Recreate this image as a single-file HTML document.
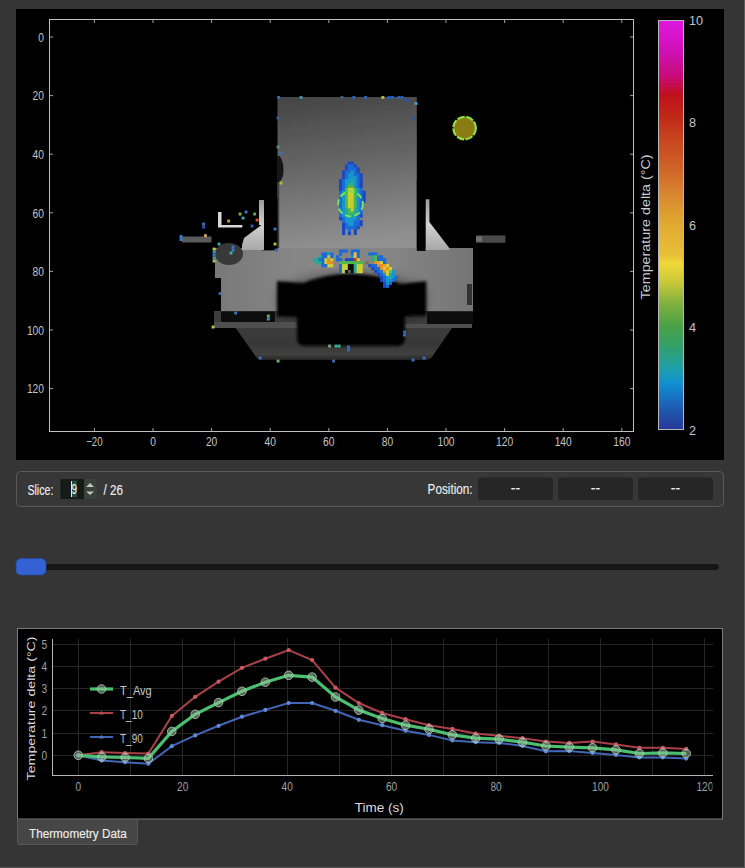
<!DOCTYPE html>
<html><head><meta charset="utf-8">
<style>
html,body{margin:0;padding:0;}
body{width:745px;height:868px;background:#353535;position:relative;overflow:hidden;font-family:"Liberation Sans",sans-serif;}
svg{position:absolute;left:0;top:0;}
.tk{font-family:"Liberation Sans",sans-serif;font-size:12.5px;fill:#a0a0a0;}
.lbl{font-family:"Liberation Sans",sans-serif;font-size:13px;fill:#dcdcdc;}
.leg{font-family:"Liberation Sans",sans-serif;font-size:12px;fill:#c4c4c4;}
.itk{font-family:"Liberation Sans",sans-serif;font-size:12.6px;fill:#c4c4c4;}
.clbl{font-family:"Liberation Sans",sans-serif;font-size:12px;fill:#cccccc;}
.ui{font-family:"Liberation Sans",sans-serif;font-size:14px;fill:#ececec;stroke:#ececec;stroke-width:0.15px;}
</style></head>
<body>
<svg width="745" height="868" viewBox="0 0 745 868">
<rect x="744" y="0" width="1" height="868" fill="#5c5c5c"/>
<rect x="0" y="867" width="745" height="1" fill="#555"/>
<rect x="16" y="9" width="708" height="451" fill="#000"/>
<defs>
<linearGradient id="ph" x1="0" y1="0" x2="0.12" y2="1">
<stop offset="0" stop-color="#444444"/><stop offset="0.5" stop-color="#686868"/><stop offset="1" stop-color="#909090"/>
</linearGradient>
<linearGradient id="bd" x1="0" y1="0" x2="1" y2="0">
<stop offset="0" stop-color="#787878"/><stop offset="0.3" stop-color="#868686"/><stop offset="0.7" stop-color="#848484"/><stop offset="1" stop-color="#747474"/>
</linearGradient>
<linearGradient id="tr" x1="0" y1="0" x2="0" y2="1">
<stop offset="0" stop-color="#3e3e3e"/><stop offset="0.7" stop-color="#383838"/><stop offset="0.88" stop-color="#404040"/><stop offset="1" stop-color="#262626"/>
</linearGradient>
<linearGradient id="wl" x1="0" y1="0" x2="0" y2="1">
<stop offset="0" stop-color="#9a9a9a"/><stop offset="0.5" stop-color="#d0d0d0"/><stop offset="1" stop-color="#a8a8a8"/>
</linearGradient>
<filter id="bl" x="-20%" y="-20%" width="140%" height="140%"><feGaussianBlur stdDeviation="7"/></filter>
<filter id="b2" x="-30%" y="-30%" width="160%" height="160%"><feGaussianBlur stdDeviation="2.5"/></filter>
<filter id="b3" x="-10%" y="-10%" width="120%" height="120%"><feGaussianBlur stdDeviation="1.6"/></filter>
<filter id="b1" x="-5%" y="-5%" width="110%" height="110%"><feGaussianBlur stdDeviation="0.7"/></filter>
</defs>
<g filter="url(#b1)">
<rect x="277.5" y="97" width="139.3" height="154" fill="url(#ph)"/>
<path d="M277 156H279.5Q283.5 161 283.5 170Q283.5 178 279.5 182H277Z" fill="#141414"/><rect x="277.2" y="182" width="2" height="68" fill="#3a3a3a"/>
<path d="M215 248H473V311.5H221V278H215Z" fill="url(#bd)"/>
<rect x="467" y="284" width="5" height="21" fill="#303030"/>
<path d="M214 311H473V324L452 328L434 354Q431 360 426 360H262Q257 360 254 354L235.7 328L214 324Z" fill="url(#tr)"/>
<rect x="221" y="311.5" width="54" height="10.5" fill="#0a0a0a"/>
<rect x="427" y="311.5" width="46" height="12.5" fill="#0a0a0a"/>
<rect x="214" y="322" width="83" height="6" fill="#505050"/>
<rect x="405" y="324" width="67" height="4" fill="#505050"/>
<path d="M282 290Q352 262 422 290V314H282Z" fill="#000" fill-opacity="0.6" filter="url(#bl)"/>
<path d="M277 281L303 283Q352 264 401 284L426.3 281V316H405V338Q405 346 397 346H305Q297 346 297 338V316.4H277Z" fill="#060606" filter="url(#b3)"/>
<ellipse cx="229" cy="254" rx="14" ry="11" fill="#383838"/>
<rect x="262" y="198" width="15.5" height="52.4" fill="#000"/>
<path d="M259 200H264V250H242V245L244 238L261.5 225H259Z" fill="url(#wl)"/>
<rect x="416.8" y="180" width="8.9" height="70.9" fill="#000"/>
<path d="M425.7 199.2H429.4V222L449.3 248V250H425.7Z" fill="url(#wl)"/>
<path d="M218 212H221.5V225H242.3V227.6H218Z" fill="#d8d8d8"/>
<rect x="182" y="236.5" width="29.5" height="6" fill="#5a5a5a"/>
<rect x="476" y="235.4" width="29.4" height="7.4" fill="#4a4a4a"/>
<rect x="476" y="236.5" width="6" height="5" fill="#707070"/>
</g>
<g filter="url(#b1)">
<rect x="277.2" y="96.0" width="2.9" height="2.9" fill="#2a68c8"/>
<rect x="299.6" y="96.0" width="2.9" height="2.9" fill="#4a90b0"/>
<rect x="340.6" y="96.0" width="2.9" height="2.9" fill="#3a5aa0"/>
<rect x="352.4" y="96.0" width="2.9" height="2.9" fill="#2a60c0"/>
<rect x="364.2" y="96.0" width="2.9" height="2.9" fill="#2a60c8"/>
<rect x="381.4" y="96.0" width="2.9" height="2.9" fill="#a8c040"/>
<rect x="387.6" y="96.0" width="2.9" height="2.9" fill="#1a60d0"/>
<rect x="390.9" y="96.0" width="2.9" height="2.9" fill="#1a60d0"/>
<rect x="397.4" y="96.0" width="2.9" height="2.9" fill="#2060c8"/>
<rect x="400.6" y="96.0" width="2.9" height="2.9" fill="#2060c8"/>
<rect x="406.1" y="99.0" width="2.9" height="2.9" fill="#2a50b0"/>
<rect x="414.6" y="102.0" width="2.9" height="2.9" fill="#40a0c8"/>
<rect x="412.4" y="116.5" width="2.9" height="2.9" fill="#3050a8"/>
<rect x="276.6" y="116.5" width="2.9" height="2.9" fill="#3a5aa8"/>
<rect x="276.6" y="145.6" width="2.9" height="2.9" fill="#40a060"/>
<rect x="279.6" y="151.6" width="2.9" height="2.9" fill="#3a70b0"/>
<rect x="279.6" y="181.6" width="2.9" height="2.9" fill="#b0b840"/>
<rect x="273.6" y="227.6" width="2.9" height="2.9" fill="#3a78b8"/>
<rect x="273.6" y="242.6" width="2.9" height="2.9" fill="#b8c040"/>
<rect x="274.6" y="248.6" width="2.9" height="2.9" fill="#3a68b8"/>
<rect x="227.2" y="219.6" width="2.9" height="2.9" fill="#c89a50"/><rect x="244.6" y="210.6" width="2.9" height="2.9" fill="#3a78c8"/><rect x="238.6" y="212.6" width="2.9" height="2.9" fill="#80b040"/><rect x="241.6" y="216.6" width="2.9" height="2.9" fill="#40a8b0"/><rect x="253.2" y="212.6" width="2.9" height="2.9" fill="#50b050"/><rect x="255.6" y="218.6" width="2.9" height="2.9" fill="#d05030"/><rect x="250.6" y="224.6" width="2.9" height="2.9" fill="#2a60c0"/><rect x="202.1" y="222.6" width="2.9" height="2.9" fill="#3a70c0"/><rect x="202.1" y="225.6" width="2.9" height="2.9" fill="#2a58b0"/><rect x="179.6" y="235.1" width="2.9" height="2.9" fill="#3a80d0"/><rect x="179.6" y="238.1" width="2.9" height="2.9" fill="#3a80d0"/><rect x="204.0" y="234.2" width="2.9" height="2.9" fill="#d0a060"/><rect x="217.6" y="242.6" width="2.9" height="2.9" fill="#40a0b0"/><rect x="212.6" y="247.6" width="2.9" height="2.9" fill="#c8c040"/><rect x="212.6" y="250.6" width="2.9" height="2.9" fill="#3a90c8"/><rect x="212.6" y="253.6" width="2.9" height="2.9" fill="#2a80c0"/><rect x="212.6" y="256.6" width="2.9" height="2.9" fill="#40a0a0"/><rect x="212.6" y="259.6" width="2.9" height="2.9" fill="#a8c060"/><rect x="231.6" y="245.6" width="2.9" height="2.9" fill="#3a70c0"/><rect x="231.6" y="248.6" width="2.9" height="2.9" fill="#3a78c8"/><rect x="229.6" y="251.6" width="2.9" height="2.9" fill="#40b0a0"/><rect x="218.6" y="292.1" width="2.9" height="2.9" fill="#3a68b0"/><rect x="234.2" y="311.6" width="2.9" height="2.9" fill="#3a70c0"/><rect x="211.6" y="325.6" width="2.9" height="2.9" fill="#c8c050"/><rect x="266.9" y="314.6" width="2.9" height="2.9" fill="#60b060"/><rect x="266.9" y="317.6" width="2.9" height="2.9" fill="#3a90c0"/>
<rect x="328.1" y="344.6" width="2.9" height="2.9" fill="#8a9a80"/><rect x="334.6" y="344.6" width="2.9" height="2.9" fill="#40b090"/><rect x="337.6" y="344.6" width="2.9" height="2.9" fill="#40b090"/><rect x="347.1" y="345.6" width="2.9" height="2.9" fill="#3a68c0"/><rect x="347.1" y="348.6" width="2.9" height="2.9" fill="#3a68c0"/><rect x="258.6" y="356.6" width="2.9" height="2.9" fill="#3a70c0"/><rect x="276.6" y="359.6" width="2.9" height="2.9" fill="#70b070"/><rect x="332.1" y="359.6" width="2.9" height="2.9" fill="#3a68b0"/><rect x="411.6" y="358.6" width="2.9" height="2.9" fill="#3a70c0"/><rect x="422.6" y="356.6" width="2.9" height="2.9" fill="#3a70c0"/><rect x="403.1" y="330.6" width="2.9" height="2.9" fill="#3a68c8"/><rect x="403.1" y="333.6" width="2.9" height="2.9" fill="#3a68c8"/>
<rect x="347.85" y="161.53" width="6.11" height="3.25" fill="#1a48c0"/>
<rect x="344.92" y="164.46" width="3.18" height="3.25" fill="#1a48c0"/>
<rect x="347.85" y="164.46" width="6.11" height="3.25" fill="#1a6ad8"/>
<rect x="353.71" y="164.46" width="3.18" height="3.25" fill="#1a48c0"/>
<rect x="344.92" y="167.39" width="3.18" height="3.25" fill="#1a48c0"/>
<rect x="347.85" y="167.39" width="9.04" height="3.25" fill="#1a6ad8"/>
<rect x="356.63" y="167.39" width="3.18" height="3.25" fill="#1a48c0"/>
<rect x="341.99" y="170.31" width="3.18" height="3.25" fill="#1a48c0"/>
<rect x="344.92" y="170.31" width="6.11" height="3.25" fill="#1a6ad8"/>
<rect x="350.77" y="170.31" width="3.18" height="3.25" fill="#1496d0"/>
<rect x="353.71" y="170.31" width="3.18" height="3.25" fill="#1a6ad8"/>
<rect x="356.63" y="170.31" width="3.18" height="3.25" fill="#1a48c0"/>
<rect x="341.99" y="173.25" width="3.18" height="3.25" fill="#1a48c0"/>
<rect x="344.92" y="173.25" width="3.18" height="3.25" fill="#1a6ad8"/>
<rect x="347.85" y="173.25" width="6.11" height="3.25" fill="#1496d0"/>
<rect x="353.71" y="173.25" width="6.11" height="3.25" fill="#1a6ad8"/>
<rect x="359.56" y="173.25" width="3.18" height="3.25" fill="#1a48c0"/>
<rect x="341.99" y="176.18" width="3.18" height="3.25" fill="#1a48c0"/>
<rect x="344.92" y="176.18" width="3.18" height="3.25" fill="#1a6ad8"/>
<rect x="347.85" y="176.18" width="9.04" height="3.25" fill="#1496d0"/>
<rect x="356.63" y="176.18" width="3.18" height="3.25" fill="#1a6ad8"/>
<rect x="359.56" y="176.18" width="3.18" height="3.25" fill="#1a48c0"/>
<rect x="339.06" y="179.11" width="3.18" height="3.25" fill="#1a48c0"/>
<rect x="341.99" y="179.11" width="3.18" height="3.25" fill="#1a6ad8"/>
<rect x="344.92" y="179.11" width="6.11" height="3.25" fill="#1496d0"/>
<rect x="350.77" y="179.11" width="3.18" height="3.25" fill="#22aa96"/>
<rect x="353.71" y="179.11" width="3.18" height="3.25" fill="#1496d0"/>
<rect x="356.63" y="179.11" width="3.18" height="3.25" fill="#1a6ad8"/>
<rect x="359.56" y="179.11" width="3.18" height="3.25" fill="#1a48c0"/>
<rect x="339.06" y="182.03" width="3.18" height="3.25" fill="#1a48c0"/>
<rect x="341.99" y="182.03" width="3.18" height="3.25" fill="#1a6ad8"/>
<rect x="344.92" y="182.03" width="3.18" height="3.25" fill="#1496d0"/>
<rect x="347.85" y="182.03" width="6.11" height="3.25" fill="#22aa96"/>
<rect x="353.71" y="182.03" width="3.18" height="3.25" fill="#1496d0"/>
<rect x="356.63" y="182.03" width="3.18" height="3.25" fill="#1a6ad8"/>
<rect x="359.56" y="182.03" width="3.18" height="3.25" fill="#1a48c0"/>
<rect x="339.06" y="184.97" width="3.18" height="3.25" fill="#1a48c0"/>
<rect x="341.99" y="184.97" width="3.18" height="3.25" fill="#1a6ad8"/>
<rect x="344.92" y="184.97" width="3.18" height="3.25" fill="#1496d0"/>
<rect x="347.85" y="184.97" width="6.11" height="3.25" fill="#50b84a"/>
<rect x="353.71" y="184.97" width="3.18" height="3.25" fill="#1496d0"/>
<rect x="356.63" y="184.97" width="3.18" height="3.25" fill="#1a6ad8"/>
<rect x="359.56" y="184.97" width="3.18" height="3.25" fill="#1a48c0"/>
<rect x="339.06" y="187.90" width="3.18" height="3.25" fill="#1a48c0"/>
<rect x="341.99" y="187.90" width="3.18" height="3.25" fill="#1a6ad8"/>
<rect x="344.92" y="187.90" width="3.18" height="3.25" fill="#50b84a"/>
<rect x="347.85" y="187.90" width="6.11" height="3.25" fill="#c8d030"/>
<rect x="353.71" y="187.90" width="3.18" height="3.25" fill="#50b84a"/>
<rect x="356.63" y="187.90" width="3.18" height="3.25" fill="#1496d0"/>
<rect x="359.56" y="187.90" width="3.18" height="3.25" fill="#1a6ad8"/>
<rect x="339.06" y="190.83" width="3.18" height="3.25" fill="#1a6ad8"/>
<rect x="341.99" y="190.83" width="3.18" height="3.25" fill="#1496d0"/>
<rect x="344.92" y="190.83" width="3.18" height="3.25" fill="#50b84a"/>
<rect x="347.85" y="190.83" width="6.11" height="3.25" fill="#c8d030"/>
<rect x="353.71" y="190.83" width="3.18" height="3.25" fill="#50b84a"/>
<rect x="356.63" y="190.83" width="3.18" height="3.25" fill="#1496d0"/>
<rect x="359.56" y="190.83" width="3.18" height="3.25" fill="#1a6ad8"/>
<rect x="362.50" y="190.83" width="3.18" height="3.25" fill="#1a48c0"/>
<rect x="339.06" y="193.75" width="3.18" height="3.25" fill="#1a6ad8"/>
<rect x="341.99" y="193.75" width="3.18" height="3.25" fill="#1496d0"/>
<rect x="344.92" y="193.75" width="3.18" height="3.25" fill="#50b84a"/>
<rect x="347.85" y="193.75" width="6.11" height="3.25" fill="#c8d030"/>
<rect x="353.71" y="193.75" width="3.18" height="3.25" fill="#50b84a"/>
<rect x="356.63" y="193.75" width="3.18" height="3.25" fill="#1496d0"/>
<rect x="359.56" y="193.75" width="3.18" height="3.25" fill="#1a6ad8"/>
<rect x="362.50" y="193.75" width="3.18" height="3.25" fill="#1a48c0"/>
<rect x="339.06" y="196.69" width="3.18" height="3.25" fill="#1a6ad8"/>
<rect x="341.99" y="196.69" width="3.18" height="3.25" fill="#1496d0"/>
<rect x="344.92" y="196.69" width="3.18" height="3.25" fill="#50b84a"/>
<rect x="347.85" y="196.69" width="6.11" height="3.25" fill="#c8d030"/>
<rect x="353.71" y="196.69" width="3.18" height="3.25" fill="#50b84a"/>
<rect x="356.63" y="196.69" width="3.18" height="3.25" fill="#1496d0"/>
<rect x="359.56" y="196.69" width="3.18" height="3.25" fill="#1a6ad8"/>
<rect x="362.50" y="196.69" width="3.18" height="3.25" fill="#1a48c0"/>
<rect x="339.06" y="199.62" width="3.18" height="3.25" fill="#1a6ad8"/>
<rect x="341.99" y="199.62" width="3.18" height="3.25" fill="#1496d0"/>
<rect x="344.92" y="199.62" width="3.18" height="3.25" fill="#50b84a"/>
<rect x="347.85" y="199.62" width="6.11" height="3.25" fill="#c8d030"/>
<rect x="353.71" y="199.62" width="3.18" height="3.25" fill="#50b84a"/>
<rect x="356.63" y="199.62" width="3.18" height="3.25" fill="#1496d0"/>
<rect x="359.56" y="199.62" width="3.18" height="3.25" fill="#1a6ad8"/>
<rect x="362.50" y="199.62" width="3.18" height="3.25" fill="#1a48c0"/>
<rect x="339.06" y="202.55" width="3.18" height="3.25" fill="#1a6ad8"/>
<rect x="341.99" y="202.55" width="3.18" height="3.25" fill="#1496d0"/>
<rect x="344.92" y="202.55" width="3.18" height="3.25" fill="#50b84a"/>
<rect x="347.85" y="202.55" width="6.11" height="3.25" fill="#c8d030"/>
<rect x="353.71" y="202.55" width="3.18" height="3.25" fill="#50b84a"/>
<rect x="356.63" y="202.55" width="3.18" height="3.25" fill="#1496d0"/>
<rect x="359.56" y="202.55" width="3.18" height="3.25" fill="#1a6ad8"/>
<rect x="339.06" y="205.48" width="3.18" height="3.25" fill="#1a6ad8"/>
<rect x="341.99" y="205.48" width="3.18" height="3.25" fill="#1496d0"/>
<rect x="344.92" y="205.48" width="3.18" height="3.25" fill="#50b84a"/>
<rect x="347.85" y="205.48" width="6.11" height="3.25" fill="#c8d030"/>
<rect x="353.71" y="205.48" width="3.18" height="3.25" fill="#50b84a"/>
<rect x="356.63" y="205.48" width="3.18" height="3.25" fill="#1496d0"/>
<rect x="359.56" y="205.48" width="3.18" height="3.25" fill="#1a6ad8"/>
<rect x="339.06" y="208.41" width="3.18" height="3.25" fill="#1a6ad8"/>
<rect x="341.99" y="208.41" width="3.18" height="3.25" fill="#1496d0"/>
<rect x="344.92" y="208.41" width="3.18" height="3.25" fill="#22aa96"/>
<rect x="347.85" y="208.41" width="3.18" height="3.25" fill="#50b84a"/>
<rect x="350.77" y="208.41" width="3.18" height="3.25" fill="#c8d030"/>
<rect x="353.71" y="208.41" width="3.18" height="3.25" fill="#22aa96"/>
<rect x="356.63" y="208.41" width="3.18" height="3.25" fill="#1496d0"/>
<rect x="359.56" y="208.41" width="3.18" height="3.25" fill="#1a6ad8"/>
<rect x="339.06" y="211.34" width="3.18" height="3.25" fill="#1a6ad8"/>
<rect x="341.99" y="211.34" width="3.18" height="3.25" fill="#1496d0"/>
<rect x="344.92" y="211.34" width="3.18" height="3.25" fill="#22aa96"/>
<rect x="347.85" y="211.34" width="6.11" height="3.25" fill="#50b84a"/>
<rect x="353.71" y="211.34" width="3.18" height="3.25" fill="#22aa96"/>
<rect x="356.63" y="211.34" width="3.18" height="3.25" fill="#1496d0"/>
<rect x="359.56" y="211.34" width="3.18" height="3.25" fill="#1a6ad8"/>
<rect x="339.06" y="214.27" width="3.18" height="3.25" fill="#1a6ad8"/>
<rect x="341.99" y="214.27" width="6.11" height="3.25" fill="#1496d0"/>
<rect x="347.85" y="214.27" width="6.11" height="3.25" fill="#22aa96"/>
<rect x="353.71" y="214.27" width="3.18" height="3.25" fill="#1496d0"/>
<rect x="356.63" y="214.27" width="3.18" height="3.25" fill="#1a6ad8"/>
<rect x="359.56" y="214.27" width="3.18" height="3.25" fill="#1a48c0"/>
<rect x="339.06" y="217.20" width="3.18" height="3.25" fill="#1a48c0"/>
<rect x="341.99" y="217.20" width="3.18" height="3.25" fill="#1a6ad8"/>
<rect x="344.92" y="217.20" width="11.97" height="3.25" fill="#1496d0"/>
<rect x="356.63" y="217.20" width="3.18" height="3.25" fill="#1a6ad8"/>
<rect x="341.99" y="220.12" width="3.18" height="3.25" fill="#1a6ad8"/>
<rect x="344.92" y="220.12" width="9.04" height="3.25" fill="#1496d0"/>
<rect x="353.71" y="220.12" width="6.11" height="3.25" fill="#1a6ad8"/>
<rect x="359.56" y="220.12" width="3.18" height="3.25" fill="#1a48c0"/>
<rect x="341.99" y="223.06" width="3.18" height="3.25" fill="#1a48c0"/>
<rect x="344.92" y="223.06" width="3.18" height="3.25" fill="#1a6ad8"/>
<rect x="347.85" y="223.06" width="6.11" height="3.25" fill="#1496d0"/>
<rect x="353.71" y="223.06" width="6.11" height="3.25" fill="#1a6ad8"/>
<rect x="359.56" y="223.06" width="3.18" height="3.25" fill="#1a48c0"/>
<rect x="341.99" y="225.99" width="3.18" height="3.25" fill="#1a48c0"/>
<rect x="344.92" y="225.99" width="11.97" height="3.25" fill="#1a6ad8"/>
<rect x="356.63" y="225.99" width="3.18" height="3.25" fill="#1a48c0"/>
<rect x="341.99" y="228.92" width="3.18" height="3.25" fill="#1a48c0"/>
<rect x="347.85" y="228.92" width="3.18" height="3.25" fill="#1a6ad8"/>
<rect x="353.71" y="228.92" width="3.18" height="3.25" fill="#1a48c0"/>
<rect x="341.99" y="231.84" width="3.18" height="3.25" fill="#1a48c0"/>
<rect x="347.85" y="231.84" width="3.18" height="3.25" fill="#1a48c0"/>
<rect x="353.71" y="231.84" width="3.18" height="3.25" fill="#1a48c0"/>
<rect x="321.48" y="252.36" width="6.11" height="3.25" fill="#1a6ad8"/>
<rect x="327.34" y="252.36" width="3.18" height="3.25" fill="#1496d0"/>
<rect x="330.26" y="252.36" width="3.18" height="3.25" fill="#1a6ad8"/>
<rect x="318.55" y="255.29" width="3.18" height="3.25" fill="#22aa96"/>
<rect x="321.48" y="255.29" width="6.11" height="3.25" fill="#1a6ad8"/>
<rect x="327.34" y="255.29" width="3.18" height="3.25" fill="#c8d030"/>
<rect x="330.26" y="255.29" width="3.18" height="3.25" fill="#1a6ad8"/>
<rect x="312.69" y="258.22" width="6.11" height="3.25" fill="#22aa96"/>
<rect x="318.55" y="258.22" width="6.11" height="3.25" fill="#1a6ad8"/>
<rect x="324.40" y="258.22" width="3.18" height="3.25" fill="#c8d030"/>
<rect x="327.34" y="258.22" width="3.18" height="3.25" fill="#e89028"/>
<rect x="330.26" y="258.22" width="3.18" height="3.25" fill="#c8d030"/>
<rect x="315.62" y="261.14" width="6.11" height="3.25" fill="#22aa96"/>
<rect x="321.48" y="261.14" width="3.18" height="3.25" fill="#1a6ad8"/>
<rect x="324.40" y="261.14" width="3.18" height="3.25" fill="#c8d030"/>
<rect x="327.34" y="261.14" width="6.11" height="3.25" fill="#e89028"/>
<rect x="321.48" y="264.08" width="6.11" height="3.25" fill="#1a6ad8"/>
<rect x="327.34" y="264.08" width="6.11" height="3.25" fill="#c8d030"/>
<rect x="339.06" y="249.43" width="9.04" height="3.25" fill="#1a6ad8"/>
<rect x="350.77" y="249.43" width="9.04" height="3.25" fill="#1a6ad8"/>
<rect x="339.06" y="252.36" width="3.18" height="3.25" fill="#1a6ad8"/>
<rect x="350.77" y="252.36" width="3.18" height="3.25" fill="#1a6ad8"/>
<rect x="353.71" y="252.36" width="3.18" height="3.25" fill="#e8c830"/>
<rect x="356.63" y="252.36" width="3.18" height="3.25" fill="#1a6ad8"/>
<rect x="336.12" y="255.29" width="3.18" height="3.25" fill="#1a6ad8"/>
<rect x="350.77" y="255.29" width="3.18" height="3.25" fill="#1496d0"/>
<rect x="353.71" y="255.29" width="3.18" height="3.25" fill="#e8c830"/>
<rect x="356.63" y="255.29" width="3.18" height="3.25" fill="#1a6ad8"/>
<rect x="336.12" y="258.22" width="6.11" height="3.25" fill="#1a6ad8"/>
<rect x="344.92" y="258.22" width="9.04" height="3.25" fill="#1a48c0"/>
<rect x="353.71" y="258.22" width="3.18" height="3.25" fill="#c83028"/>
<rect x="356.63" y="258.22" width="3.18" height="3.25" fill="#e8c830"/>
<rect x="339.06" y="261.14" width="23.69" height="3.25" fill="#50b84a"/>
<rect x="339.06" y="264.08" width="3.18" height="3.25" fill="#1a6ad8"/>
<rect x="341.99" y="264.08" width="6.11" height="3.25" fill="#c8d030"/>
<rect x="347.85" y="264.08" width="6.11" height="3.25" fill="#101010"/>
<rect x="353.71" y="264.08" width="3.18" height="3.25" fill="#22aa96"/>
<rect x="356.63" y="264.08" width="6.11" height="3.25" fill="#c8d030"/>
<rect x="339.06" y="267.00" width="3.18" height="3.25" fill="#1a6ad8"/>
<rect x="341.99" y="267.00" width="6.11" height="3.25" fill="#c8d030"/>
<rect x="347.85" y="267.00" width="6.11" height="3.25" fill="#101010"/>
<rect x="353.71" y="267.00" width="3.18" height="3.25" fill="#22aa96"/>
<rect x="356.63" y="267.00" width="6.11" height="3.25" fill="#c8d030"/>
<rect x="339.06" y="269.94" width="3.18" height="3.25" fill="#1a6ad8"/>
<rect x="341.99" y="269.94" width="3.18" height="3.25" fill="#c8d030"/>
<rect x="344.92" y="269.94" width="3.18" height="3.25" fill="#101010"/>
<rect x="350.77" y="269.94" width="3.18" height="3.25" fill="#101010"/>
<rect x="353.71" y="269.94" width="3.18" height="3.25" fill="#22aa96"/>
<rect x="356.63" y="269.94" width="3.18" height="3.25" fill="#c8d030"/>
<rect x="359.56" y="269.94" width="3.18" height="3.25" fill="#e8c830"/>
<rect x="368.36" y="252.36" width="9.04" height="3.25" fill="#1a6ad8"/>
<rect x="371.29" y="255.29" width="3.18" height="3.25" fill="#22aa96"/>
<rect x="374.22" y="255.29" width="3.18" height="3.25" fill="#50b84a"/>
<rect x="377.14" y="255.29" width="6.11" height="3.25" fill="#1a6ad8"/>
<rect x="371.29" y="258.22" width="3.18" height="3.25" fill="#22aa96"/>
<rect x="374.22" y="258.22" width="3.18" height="3.25" fill="#50b84a"/>
<rect x="377.14" y="258.22" width="9.04" height="3.25" fill="#1a6ad8"/>
<rect x="365.43" y="261.14" width="3.18" height="3.25" fill="#7a7040"/>
<rect x="374.22" y="261.14" width="3.18" height="3.25" fill="#e89028"/>
<rect x="377.14" y="261.14" width="3.18" height="3.25" fill="#e0a830"/>
<rect x="380.08" y="261.14" width="3.18" height="3.25" fill="#e8c830"/>
<rect x="383.00" y="261.14" width="3.18" height="3.25" fill="#1a6ad8"/>
<rect x="368.36" y="264.08" width="3.18" height="3.25" fill="#1a48c0"/>
<rect x="371.29" y="264.08" width="6.11" height="3.25" fill="#1a6ad8"/>
<rect x="377.14" y="264.08" width="6.11" height="3.25" fill="#e89028"/>
<rect x="383.00" y="264.08" width="3.18" height="3.25" fill="#e0a830"/>
<rect x="385.94" y="264.08" width="3.18" height="3.25" fill="#e8c830"/>
<rect x="371.29" y="267.00" width="3.18" height="3.25" fill="#1a48c0"/>
<rect x="374.22" y="267.00" width="6.11" height="3.25" fill="#1a6ad8"/>
<rect x="380.08" y="267.00" width="3.18" height="3.25" fill="#e89028"/>
<rect x="383.00" y="267.00" width="3.18" height="3.25" fill="#e8c830"/>
<rect x="385.94" y="267.00" width="3.18" height="3.25" fill="#e89028"/>
<rect x="388.87" y="267.00" width="3.18" height="3.25" fill="#c8d030"/>
<rect x="374.22" y="269.94" width="3.18" height="3.25" fill="#1a48c0"/>
<rect x="377.14" y="269.94" width="3.18" height="3.25" fill="#1a6ad8"/>
<rect x="380.08" y="269.94" width="3.18" height="3.25" fill="#2a78d8"/>
<rect x="383.00" y="269.94" width="3.18" height="3.25" fill="#e89028"/>
<rect x="385.94" y="269.94" width="3.18" height="3.25" fill="#c8d030"/>
<rect x="388.87" y="269.94" width="3.18" height="3.25" fill="#80c040"/>
<rect x="391.80" y="269.94" width="3.18" height="3.25" fill="#1496d0"/>
<rect x="377.14" y="272.87" width="3.18" height="3.25" fill="#1a48c0"/>
<rect x="380.08" y="272.87" width="3.18" height="3.25" fill="#1a6ad8"/>
<rect x="383.00" y="272.87" width="3.18" height="3.25" fill="#1496d0"/>
<rect x="385.94" y="272.87" width="3.18" height="3.25" fill="#e8c830"/>
<rect x="388.87" y="272.87" width="3.18" height="3.25" fill="#22aa96"/>
<rect x="391.80" y="272.87" width="3.18" height="3.25" fill="#1496d0"/>
<rect x="380.08" y="275.80" width="3.18" height="3.25" fill="#1a48c0"/>
<rect x="383.00" y="275.80" width="3.18" height="3.25" fill="#1a6ad8"/>
<rect x="385.94" y="275.80" width="3.18" height="3.25" fill="#1496d0"/>
<rect x="388.87" y="275.80" width="3.18" height="3.25" fill="#22aa96"/>
<rect x="391.80" y="275.80" width="3.18" height="3.25" fill="#1496d0"/>
<rect x="394.73" y="275.80" width="3.18" height="3.25" fill="#1a6ad8"/>
<rect x="380.08" y="278.73" width="3.18" height="3.25" fill="#1a48c0"/>
<rect x="383.00" y="278.73" width="3.18" height="3.25" fill="#1a6ad8"/>
<rect x="385.94" y="278.73" width="6.11" height="3.25" fill="#1496d0"/>
<rect x="391.80" y="278.73" width="3.18" height="3.25" fill="#1a6ad8"/>
<rect x="383.00" y="281.65" width="3.18" height="3.25" fill="#1a48c0"/>
<rect x="385.94" y="281.65" width="3.18" height="3.25" fill="#1496d0"/>
<rect x="388.87" y="281.65" width="3.18" height="3.25" fill="#1a6ad8"/>
<rect x="383.00" y="284.59" width="3.18" height="3.25" fill="#1a48c0"/>
<rect x="385.94" y="284.59" width="3.18" height="3.25" fill="#1a6ad8"/>
</g>
<circle cx="350.5" cy="204" r="12.4" fill="none" stroke="#6ee65e" stroke-width="2" stroke-dasharray="6.2 3.1"/>
<circle cx="464.6" cy="128.1" r="11.3" fill="#8a7c12" stroke="#8ede44" stroke-width="2.2" stroke-dasharray="7.5 1.6"/>
<rect x="49.5" y="19.5" width="584" height="412" fill="none" stroke="#c0c0c0" stroke-width="1"/>
<line x1="94.4" y1="431" x2="94.4" y2="428" stroke="#a0a0a0"/>
<line x1="94.4" y1="20" x2="94.4" y2="23" stroke="#a0a0a0"/>
<text x="94.4" y="446.2" text-anchor="middle" class="itk" textLength="16.5" lengthAdjust="spacingAndGlyphs">−20</text>
<line x1="153.0" y1="431" x2="153.0" y2="428" stroke="#a0a0a0"/>
<line x1="153.0" y1="20" x2="153.0" y2="23" stroke="#a0a0a0"/>
<text x="153.0" y="446.2" text-anchor="middle" class="itk" textLength="5.7" lengthAdjust="spacingAndGlyphs">0</text>
<line x1="211.6" y1="431" x2="211.6" y2="428" stroke="#a0a0a0"/>
<line x1="211.6" y1="20" x2="211.6" y2="23" stroke="#a0a0a0"/>
<text x="211.6" y="446.2" text-anchor="middle" class="itk" textLength="11.4" lengthAdjust="spacingAndGlyphs">20</text>
<line x1="270.2" y1="431" x2="270.2" y2="428" stroke="#a0a0a0"/>
<line x1="270.2" y1="20" x2="270.2" y2="23" stroke="#a0a0a0"/>
<text x="270.2" y="446.2" text-anchor="middle" class="itk" textLength="11.4" lengthAdjust="spacingAndGlyphs">40</text>
<line x1="328.8" y1="431" x2="328.8" y2="428" stroke="#a0a0a0"/>
<line x1="328.8" y1="20" x2="328.8" y2="23" stroke="#a0a0a0"/>
<text x="328.8" y="446.2" text-anchor="middle" class="itk" textLength="11.4" lengthAdjust="spacingAndGlyphs">60</text>
<line x1="387.4" y1="431" x2="387.4" y2="428" stroke="#a0a0a0"/>
<line x1="387.4" y1="20" x2="387.4" y2="23" stroke="#a0a0a0"/>
<text x="387.4" y="446.2" text-anchor="middle" class="itk" textLength="11.4" lengthAdjust="spacingAndGlyphs">80</text>
<line x1="446.0" y1="431" x2="446.0" y2="428" stroke="#a0a0a0"/>
<line x1="446.0" y1="20" x2="446.0" y2="23" stroke="#a0a0a0"/>
<text x="446.0" y="446.2" text-anchor="middle" class="itk" textLength="17.1" lengthAdjust="spacingAndGlyphs">100</text>
<line x1="504.6" y1="431" x2="504.6" y2="428" stroke="#a0a0a0"/>
<line x1="504.6" y1="20" x2="504.6" y2="23" stroke="#a0a0a0"/>
<text x="504.6" y="446.2" text-anchor="middle" class="itk" textLength="17.1" lengthAdjust="spacingAndGlyphs">120</text>
<line x1="563.2" y1="431" x2="563.2" y2="428" stroke="#a0a0a0"/>
<line x1="563.2" y1="20" x2="563.2" y2="23" stroke="#a0a0a0"/>
<text x="563.2" y="446.2" text-anchor="middle" class="itk" textLength="17.1" lengthAdjust="spacingAndGlyphs">140</text>
<line x1="621.8" y1="431" x2="621.8" y2="428" stroke="#a0a0a0"/>
<line x1="621.8" y1="20" x2="621.8" y2="23" stroke="#a0a0a0"/>
<text x="621.8" y="446.2" text-anchor="middle" class="itk" textLength="17.1" lengthAdjust="spacingAndGlyphs">160</text>
<line x1="50" y1="37.0" x2="53" y2="37.0" stroke="#a0a0a0"/>
<line x1="633" y1="37.0" x2="630" y2="37.0" stroke="#a0a0a0"/>
<text x="44" y="41.8" text-anchor="end" class="itk" textLength="5.7" lengthAdjust="spacingAndGlyphs">0</text>
<line x1="50" y1="95.6" x2="53" y2="95.6" stroke="#a0a0a0"/>
<line x1="633" y1="95.6" x2="630" y2="95.6" stroke="#a0a0a0"/>
<text x="44" y="100.4" text-anchor="end" class="itk" textLength="11.4" lengthAdjust="spacingAndGlyphs">20</text>
<line x1="50" y1="154.2" x2="53" y2="154.2" stroke="#a0a0a0"/>
<line x1="633" y1="154.2" x2="630" y2="154.2" stroke="#a0a0a0"/>
<text x="44" y="159.0" text-anchor="end" class="itk" textLength="11.4" lengthAdjust="spacingAndGlyphs">40</text>
<line x1="50" y1="212.8" x2="53" y2="212.8" stroke="#a0a0a0"/>
<line x1="633" y1="212.8" x2="630" y2="212.8" stroke="#a0a0a0"/>
<text x="44" y="217.6" text-anchor="end" class="itk" textLength="11.4" lengthAdjust="spacingAndGlyphs">60</text>
<line x1="50" y1="271.4" x2="53" y2="271.4" stroke="#a0a0a0"/>
<line x1="633" y1="271.4" x2="630" y2="271.4" stroke="#a0a0a0"/>
<text x="44" y="276.2" text-anchor="end" class="itk" textLength="11.4" lengthAdjust="spacingAndGlyphs">80</text>
<line x1="50" y1="330.0" x2="53" y2="330.0" stroke="#a0a0a0"/>
<line x1="633" y1="330.0" x2="630" y2="330.0" stroke="#a0a0a0"/>
<text x="44" y="334.8" text-anchor="end" class="itk" textLength="17.1" lengthAdjust="spacingAndGlyphs">100</text>
<line x1="50" y1="388.6" x2="53" y2="388.6" stroke="#a0a0a0"/>
<line x1="633" y1="388.6" x2="630" y2="388.6" stroke="#a0a0a0"/>
<text x="44" y="393.4" text-anchor="end" class="itk" textLength="17.1" lengthAdjust="spacingAndGlyphs">120</text>
<defs><linearGradient id="cb" x1="0" y1="0" x2="0" y2="1">
<stop offset="0" stop-color="#e018e0"/>
<stop offset="0.073" stop-color="#d010b8"/>
<stop offset="0.137" stop-color="#c80c78"/>
<stop offset="0.182" stop-color="#c0101c"/>
<stop offset="0.234" stop-color="#c02818"/>
<stop offset="0.297" stop-color="#c84820"/>
<stop offset="0.363" stop-color="#d06428"/>
<stop offset="0.427" stop-color="#d88830"/>
<stop offset="0.493" stop-color="#e0a830"/>
<stop offset="0.573" stop-color="#e8c038"/>
<stop offset="0.595" stop-color="#f0d838"/>
<stop offset="0.641" stop-color="#c8c838"/>
<stop offset="0.693" stop-color="#80b040"/>
<stop offset="0.751" stop-color="#48a048"/>
<stop offset="0.802" stop-color="#30a070"/>
<stop offset="0.849" stop-color="#20a0a8"/>
<stop offset="0.887" stop-color="#1090d0"/>
<stop offset="0.924" stop-color="#1870c0"/>
<stop offset="0.963" stop-color="#2050a8"/>
<stop offset="1" stop-color="#283898"/>
</linearGradient></defs>
<rect x="658.5" y="20.5" width="25" height="409" fill="url(#cb)" stroke="#b8b8b8" stroke-width="1"/>
<text x="689" y="24.5" class="itk">10</text>
<text x="689" y="127.0" class="itk">8</text>
<text x="689" y="229.5" class="itk">6</text>
<text x="689" y="332.0" class="itk">4</text>
<text x="689" y="434.5" class="itk">2</text>
<text transform="translate(649.5,299.4) rotate(-90)" class="clbl" textLength="145" lengthAdjust="spacingAndGlyphs">Temperature delta (°C)</text>
<!-- slice panel -->
<rect x="16.5" y="471.5" width="707" height="35" rx="4" fill="#373737" stroke="#5a5a5a"/>
<text x="27.4" y="494.5" class="ui" textLength="26" lengthAdjust="spacingAndGlyphs">Slice:</text>
<rect x="60.5" y="479" width="23.5" height="20" fill="#161a18"/>
<rect x="72" y="480.6" width="5" height="16.6" fill="#2c4a3a"/>
<text x="71.5" y="494.2" class="ui" textLength="5.5" lengthAdjust="spacingAndGlyphs">9</text>
<rect x="71" y="481" width="1" height="16" fill="#e8e8e8"/>
<rect x="84" y="479" width="12.7" height="20" fill="#3a413d"/>
<path d="M86.1 487l3.95-4 3.95 4z" fill="#c0c8c4"/>
<path d="M86.1 491.5l3.95 3.6 3.95-3.6z" fill="#c0c8c4"/>
<text x="103.5" y="494.5" class="ui" textLength="19.5" lengthAdjust="spacingAndGlyphs">/ 26</text>
<text x="427.6" y="494.2" class="ui" textLength="45" lengthAdjust="spacingAndGlyphs">Position:</text>
<rect x="478" y="477.5" width="75" height="22.5" rx="3" fill="#262626"/>
<rect x="558" y="477.5" width="75" height="22.5" rx="3" fill="#262626"/>
<rect x="638" y="477.5" width="75" height="22.5" rx="3" fill="#262626"/>
<text x="515.5" y="493" text-anchor="middle" class="ui">--</text>
<text x="595.5" y="493" text-anchor="middle" class="ui">--</text>
<text x="675.5" y="493" text-anchor="middle" class="ui">--</text>
<!-- slider -->
<rect x="17" y="564" width="702" height="6" rx="3" fill="#161616"/>
<rect x="16" y="558.5" width="30" height="16.5" rx="5" fill="#3462d4" stroke="#2a4aa0" stroke-width="0.8"/>
<!-- chart panel -->
<rect x="17.5" y="628.5" width="705" height="190.5" fill="#000" stroke="#7a7a7a"/>
<line x1="78.5" y1="638.5" x2="78.5" y2="775" stroke="#262626" stroke-width="1"/>
<line x1="130.5" y1="638.5" x2="130.5" y2="775" stroke="#262626" stroke-width="1"/>
<line x1="182.5" y1="638.5" x2="182.5" y2="775" stroke="#262626" stroke-width="1"/>
<line x1="234.5" y1="638.5" x2="234.5" y2="775" stroke="#262626" stroke-width="1"/>
<line x1="287.5" y1="638.5" x2="287.5" y2="775" stroke="#262626" stroke-width="1"/>
<line x1="339.5" y1="638.5" x2="339.5" y2="775" stroke="#262626" stroke-width="1"/>
<line x1="391.5" y1="638.5" x2="391.5" y2="775" stroke="#262626" stroke-width="1"/>
<line x1="443.5" y1="638.5" x2="443.5" y2="775" stroke="#262626" stroke-width="1"/>
<line x1="496.5" y1="638.5" x2="496.5" y2="775" stroke="#262626" stroke-width="1"/>
<line x1="548.5" y1="638.5" x2="548.5" y2="775" stroke="#262626" stroke-width="1"/>
<line x1="600.5" y1="638.5" x2="600.5" y2="775" stroke="#262626" stroke-width="1"/>
<line x1="652.5" y1="638.5" x2="652.5" y2="775" stroke="#262626" stroke-width="1"/>
<line x1="704.5" y1="638.5" x2="704.5" y2="775" stroke="#262626" stroke-width="1"/>
<line x1="53" y1="755.5" x2="713" y2="755.5" stroke="#262626" stroke-width="1"/>
<line x1="53" y1="733.5" x2="713" y2="733.5" stroke="#262626" stroke-width="1"/>
<line x1="53" y1="710.5" x2="713" y2="710.5" stroke="#262626" stroke-width="1"/>
<line x1="53" y1="688.5" x2="713" y2="688.5" stroke="#262626" stroke-width="1"/>
<line x1="53" y1="666.5" x2="713" y2="666.5" stroke="#262626" stroke-width="1"/>
<line x1="53" y1="644.5" x2="713" y2="644.5" stroke="#262626" stroke-width="1"/>
<line x1="52.5" y1="639" x2="52.5" y2="775.5" stroke="#b4b4b4" stroke-width="1"/>
<line x1="52" y1="775.5" x2="713" y2="775.5" stroke="#b4b4b4" stroke-width="1"/>
<text x="47.2" y="759.7" text-anchor="end" class="tk" textLength="5.6" lengthAdjust="spacingAndGlyphs">0</text>
<text x="47.2" y="737.5" text-anchor="end" class="tk" textLength="5.6" lengthAdjust="spacingAndGlyphs">1</text>
<text x="47.2" y="715.4" text-anchor="end" class="tk" textLength="5.6" lengthAdjust="spacingAndGlyphs">2</text>
<text x="47.2" y="693.2" text-anchor="end" class="tk" textLength="5.6" lengthAdjust="spacingAndGlyphs">3</text>
<text x="47.2" y="671.1" text-anchor="end" class="tk" textLength="5.6" lengthAdjust="spacingAndGlyphs">4</text>
<text x="47.2" y="648.9" text-anchor="end" class="tk" textLength="5.6" lengthAdjust="spacingAndGlyphs">5</text>
<text x="78.3" y="791" text-anchor="middle" class="tk" textLength="5.6" lengthAdjust="spacingAndGlyphs">0</text>
<text x="182.7" y="791" text-anchor="middle" class="tk" textLength="11.2" lengthAdjust="spacingAndGlyphs">20</text>
<text x="287.2" y="791" text-anchor="middle" class="tk" textLength="11.2" lengthAdjust="spacingAndGlyphs">40</text>
<text x="391.6" y="791" text-anchor="middle" class="tk" textLength="11.2" lengthAdjust="spacingAndGlyphs">60</text>
<text x="496.1" y="791" text-anchor="middle" class="tk" textLength="11.2" lengthAdjust="spacingAndGlyphs">80</text>
<text x="600.5" y="791" text-anchor="middle" class="tk" textLength="16.8" lengthAdjust="spacingAndGlyphs">100</text>
<text x="704.9" y="791" text-anchor="middle" class="tk" textLength="16.8" lengthAdjust="spacingAndGlyphs" clip-path="url(#cclip)">120</text>
<defs><clipPath id="cclip"><rect x="600" y="770" width="112.5" height="30"/></clipPath></defs>
<text x="354.8" y="811.6" class="lbl" textLength="49" lengthAdjust="spacingAndGlyphs">Time (s)</text>
<text transform="translate(34.5,780.4) rotate(-90)" class="lbl" style="font-size:11.5px" textLength="144" lengthAdjust="spacingAndGlyphs">Temperature delta (°C)</text>
<polyline points="78.3,755.3 101.7,752.2 125.1,753.1 148.4,753.5 171.8,715.9 195.2,696.8 218.6,681.7 242.0,667.8 265.3,658.7 288.7,650.0 312.1,660.0 335.5,687.7 358.8,703.0 382.2,713.0 405.6,719.2 429.0,725.2 452.4,728.9 475.7,733.6 499.1,735.8 522.5,738.2 545.9,741.6 569.3,742.9 592.6,741.6 616.0,744.4 639.4,747.8 662.8,747.8 686.2,748.9" fill="none" stroke="#a8404a" stroke-width="2"/>
<polyline points="78.3,755.3 101.7,760.6 125.1,762.2 148.4,763.7 171.8,746.2 195.2,735.4 218.6,725.8 242.0,716.7 265.3,709.9 288.7,703.0 312.1,703.0 335.5,710.8 358.8,719.8 382.2,725.2 405.6,730.7 429.0,734.9 452.4,740.5 475.7,742.2 499.1,742.9 522.5,746.0 545.9,751.3 569.3,751.1 592.6,752.9 616.0,754.9 639.4,757.5 662.8,757.5 686.2,758.6" fill="none" stroke="#4464b4" stroke-width="2"/>
<circle cx="78.3" cy="755.3" r="2.1" fill="#c85a60"/>
<circle cx="101.7" cy="752.2" r="2.1" fill="#c85a60"/>
<circle cx="125.1" cy="753.1" r="2.1" fill="#c85a60"/>
<circle cx="148.4" cy="753.5" r="2.1" fill="#c85a60"/>
<circle cx="171.8" cy="715.9" r="2.1" fill="#c85a60"/>
<circle cx="195.2" cy="696.8" r="2.1" fill="#c85a60"/>
<circle cx="218.6" cy="681.7" r="2.1" fill="#c85a60"/>
<circle cx="242.0" cy="667.8" r="2.1" fill="#c85a60"/>
<circle cx="265.3" cy="658.7" r="2.1" fill="#c85a60"/>
<circle cx="288.7" cy="650.0" r="2.1" fill="#c85a60"/>
<circle cx="312.1" cy="660.0" r="2.1" fill="#c85a60"/>
<circle cx="335.5" cy="687.7" r="2.1" fill="#c85a60"/>
<circle cx="358.8" cy="703.0" r="2.1" fill="#c85a60"/>
<circle cx="382.2" cy="713.0" r="2.1" fill="#c85a60"/>
<circle cx="405.6" cy="719.2" r="2.1" fill="#c85a60"/>
<circle cx="429.0" cy="725.2" r="2.1" fill="#c85a60"/>
<circle cx="452.4" cy="728.9" r="2.1" fill="#c85a60"/>
<circle cx="475.7" cy="733.6" r="2.1" fill="#c85a60"/>
<circle cx="499.1" cy="735.8" r="2.1" fill="#c85a60"/>
<circle cx="522.5" cy="738.2" r="2.1" fill="#c85a60"/>
<circle cx="545.9" cy="741.6" r="2.1" fill="#c85a60"/>
<circle cx="569.3" cy="742.9" r="2.1" fill="#c85a60"/>
<circle cx="592.6" cy="741.6" r="2.1" fill="#c85a60"/>
<circle cx="616.0" cy="744.4" r="2.1" fill="#c85a60"/>
<circle cx="639.4" cy="747.8" r="2.1" fill="#c85a60"/>
<circle cx="662.8" cy="747.8" r="2.1" fill="#c85a60"/>
<circle cx="686.2" cy="748.9" r="2.1" fill="#c85a60"/>
<circle cx="78.3" cy="755.3" r="2.1" fill="#6088d8"/>
<circle cx="101.7" cy="760.6" r="2.1" fill="#6088d8"/>
<circle cx="125.1" cy="762.2" r="2.1" fill="#6088d8"/>
<circle cx="148.4" cy="763.7" r="2.1" fill="#6088d8"/>
<circle cx="171.8" cy="746.2" r="2.1" fill="#6088d8"/>
<circle cx="195.2" cy="735.4" r="2.1" fill="#6088d8"/>
<circle cx="218.6" cy="725.8" r="2.1" fill="#6088d8"/>
<circle cx="242.0" cy="716.7" r="2.1" fill="#6088d8"/>
<circle cx="265.3" cy="709.9" r="2.1" fill="#6088d8"/>
<circle cx="288.7" cy="703.0" r="2.1" fill="#6088d8"/>
<circle cx="312.1" cy="703.0" r="2.1" fill="#6088d8"/>
<circle cx="335.5" cy="710.8" r="2.1" fill="#6088d8"/>
<circle cx="358.8" cy="719.8" r="2.1" fill="#6088d8"/>
<circle cx="382.2" cy="725.2" r="2.1" fill="#6088d8"/>
<circle cx="405.6" cy="730.7" r="2.1" fill="#6088d8"/>
<circle cx="429.0" cy="734.9" r="2.1" fill="#6088d8"/>
<circle cx="452.4" cy="740.5" r="2.1" fill="#6088d8"/>
<circle cx="475.7" cy="742.2" r="2.1" fill="#6088d8"/>
<circle cx="499.1" cy="742.9" r="2.1" fill="#6088d8"/>
<circle cx="522.5" cy="746.0" r="2.1" fill="#6088d8"/>
<circle cx="545.9" cy="751.3" r="2.1" fill="#6088d8"/>
<circle cx="569.3" cy="751.1" r="2.1" fill="#6088d8"/>
<circle cx="592.6" cy="752.9" r="2.1" fill="#6088d8"/>
<circle cx="616.0" cy="754.9" r="2.1" fill="#6088d8"/>
<circle cx="639.4" cy="757.5" r="2.1" fill="#6088d8"/>
<circle cx="662.8" cy="757.5" r="2.1" fill="#6088d8"/>
<circle cx="686.2" cy="758.6" r="2.1" fill="#6088d8"/>
<polyline points="78.3,755.3 101.7,756.9 125.1,757.5 148.4,758.4 171.8,731.4 195.2,714.3 218.6,702.6 242.0,691.3 265.3,682.2 288.7,675.3 312.1,677.1 335.5,697.0 358.8,710.1 382.2,718.5 405.6,725.2 429.0,729.2 452.4,734.9 475.7,738.2 499.1,739.1 522.5,742.2 545.9,746.0 569.3,747.1 592.6,747.8 616.0,749.8 639.4,753.5 662.8,752.9 686.2,753.5" fill="none" stroke="#4cc070" stroke-width="3.2"/>
<circle cx="78.3" cy="755.3" r="4.3" fill="#a0c0a6" fill-opacity="0.5" stroke="#a8ccb0" stroke-opacity="0.85" stroke-width="1"/>
<circle cx="101.7" cy="756.9" r="4.3" fill="#a0c0a6" fill-opacity="0.5" stroke="#a8ccb0" stroke-opacity="0.85" stroke-width="1"/>
<circle cx="125.1" cy="757.5" r="4.3" fill="#a0c0a6" fill-opacity="0.5" stroke="#a8ccb0" stroke-opacity="0.85" stroke-width="1"/>
<circle cx="148.4" cy="758.4" r="4.3" fill="#a0c0a6" fill-opacity="0.5" stroke="#a8ccb0" stroke-opacity="0.85" stroke-width="1"/>
<circle cx="171.8" cy="731.4" r="4.3" fill="#a0c0a6" fill-opacity="0.5" stroke="#a8ccb0" stroke-opacity="0.85" stroke-width="1"/>
<circle cx="195.2" cy="714.3" r="4.3" fill="#a0c0a6" fill-opacity="0.5" stroke="#a8ccb0" stroke-opacity="0.85" stroke-width="1"/>
<circle cx="218.6" cy="702.6" r="4.3" fill="#a0c0a6" fill-opacity="0.5" stroke="#a8ccb0" stroke-opacity="0.85" stroke-width="1"/>
<circle cx="242.0" cy="691.3" r="4.3" fill="#a0c0a6" fill-opacity="0.5" stroke="#a8ccb0" stroke-opacity="0.85" stroke-width="1"/>
<circle cx="265.3" cy="682.2" r="4.3" fill="#a0c0a6" fill-opacity="0.5" stroke="#a8ccb0" stroke-opacity="0.85" stroke-width="1"/>
<circle cx="288.7" cy="675.3" r="4.3" fill="#a0c0a6" fill-opacity="0.5" stroke="#a8ccb0" stroke-opacity="0.85" stroke-width="1"/>
<circle cx="312.1" cy="677.1" r="4.3" fill="#a0c0a6" fill-opacity="0.5" stroke="#a8ccb0" stroke-opacity="0.85" stroke-width="1"/>
<circle cx="335.5" cy="697.0" r="4.3" fill="#a0c0a6" fill-opacity="0.5" stroke="#a8ccb0" stroke-opacity="0.85" stroke-width="1"/>
<circle cx="358.8" cy="710.1" r="4.3" fill="#a0c0a6" fill-opacity="0.5" stroke="#a8ccb0" stroke-opacity="0.85" stroke-width="1"/>
<circle cx="382.2" cy="718.5" r="4.3" fill="#a0c0a6" fill-opacity="0.5" stroke="#a8ccb0" stroke-opacity="0.85" stroke-width="1"/>
<circle cx="405.6" cy="725.2" r="4.3" fill="#a0c0a6" fill-opacity="0.5" stroke="#a8ccb0" stroke-opacity="0.85" stroke-width="1"/>
<circle cx="429.0" cy="729.2" r="4.3" fill="#a0c0a6" fill-opacity="0.5" stroke="#a8ccb0" stroke-opacity="0.85" stroke-width="1"/>
<circle cx="452.4" cy="734.9" r="4.3" fill="#a0c0a6" fill-opacity="0.5" stroke="#a8ccb0" stroke-opacity="0.85" stroke-width="1"/>
<circle cx="475.7" cy="738.2" r="4.3" fill="#a0c0a6" fill-opacity="0.5" stroke="#a8ccb0" stroke-opacity="0.85" stroke-width="1"/>
<circle cx="499.1" cy="739.1" r="4.3" fill="#a0c0a6" fill-opacity="0.5" stroke="#a8ccb0" stroke-opacity="0.85" stroke-width="1"/>
<circle cx="522.5" cy="742.2" r="4.3" fill="#a0c0a6" fill-opacity="0.5" stroke="#a8ccb0" stroke-opacity="0.85" stroke-width="1"/>
<circle cx="545.9" cy="746.0" r="4.3" fill="#a0c0a6" fill-opacity="0.5" stroke="#a8ccb0" stroke-opacity="0.85" stroke-width="1"/>
<circle cx="569.3" cy="747.1" r="4.3" fill="#a0c0a6" fill-opacity="0.5" stroke="#a8ccb0" stroke-opacity="0.85" stroke-width="1"/>
<circle cx="592.6" cy="747.8" r="4.3" fill="#a0c0a6" fill-opacity="0.5" stroke="#a8ccb0" stroke-opacity="0.85" stroke-width="1"/>
<circle cx="616.0" cy="749.8" r="4.3" fill="#a0c0a6" fill-opacity="0.5" stroke="#a8ccb0" stroke-opacity="0.85" stroke-width="1"/>
<circle cx="639.4" cy="753.5" r="4.3" fill="#a0c0a6" fill-opacity="0.5" stroke="#a8ccb0" stroke-opacity="0.85" stroke-width="1"/>
<circle cx="662.8" cy="752.9" r="4.3" fill="#a0c0a6" fill-opacity="0.5" stroke="#a8ccb0" stroke-opacity="0.85" stroke-width="1"/>
<circle cx="686.2" cy="753.5" r="4.3" fill="#a0c0a6" fill-opacity="0.5" stroke="#a8ccb0" stroke-opacity="0.85" stroke-width="1"/>
<line x1="90" y1="689" x2="113" y2="689" stroke="#4cc070" stroke-width="3.2"/>
<circle cx="101.5" cy="689" r="4.3" fill="#a0c0a6" fill-opacity="0.5" stroke="#a8ccb0" stroke-opacity="0.85" stroke-width="1"/>
<line x1="90" y1="713" x2="113" y2="713" stroke="#a8404a" stroke-width="2"/>
<path d="M101.5 710.8l-2.2 3.6h4.4z" fill="#c04a50"/>
<line x1="90" y1="737" x2="113" y2="737" stroke="#4464b4" stroke-width="2"/>
<path d="M101.5 734.8l-2.2 3.6h4.4z" fill="#5478d0"/>
<text x="120" y="695" class="leg" textLength="31.7" lengthAdjust="spacingAndGlyphs">T_Avg</text>
<text x="120" y="718.8" class="leg" textLength="22.8" lengthAdjust="spacingAndGlyphs">T_10</text>
<text x="120" y="742.6" class="leg" textLength="22.8" lengthAdjust="spacingAndGlyphs">T_90</text>
<!-- tab -->
<path d="M17.5 819.5H137.5V842.5Q137.5 844.5 135.5 844.5H19.5Q17.5 844.5 17.5 842.5Z" fill="#464646" stroke="#565656"/>
<text x="29" y="838" class="ui" style="font-size:12.5px" textLength="97.7" lengthAdjust="spacingAndGlyphs">Thermometry Data</text>
</svg>
</body></html>
